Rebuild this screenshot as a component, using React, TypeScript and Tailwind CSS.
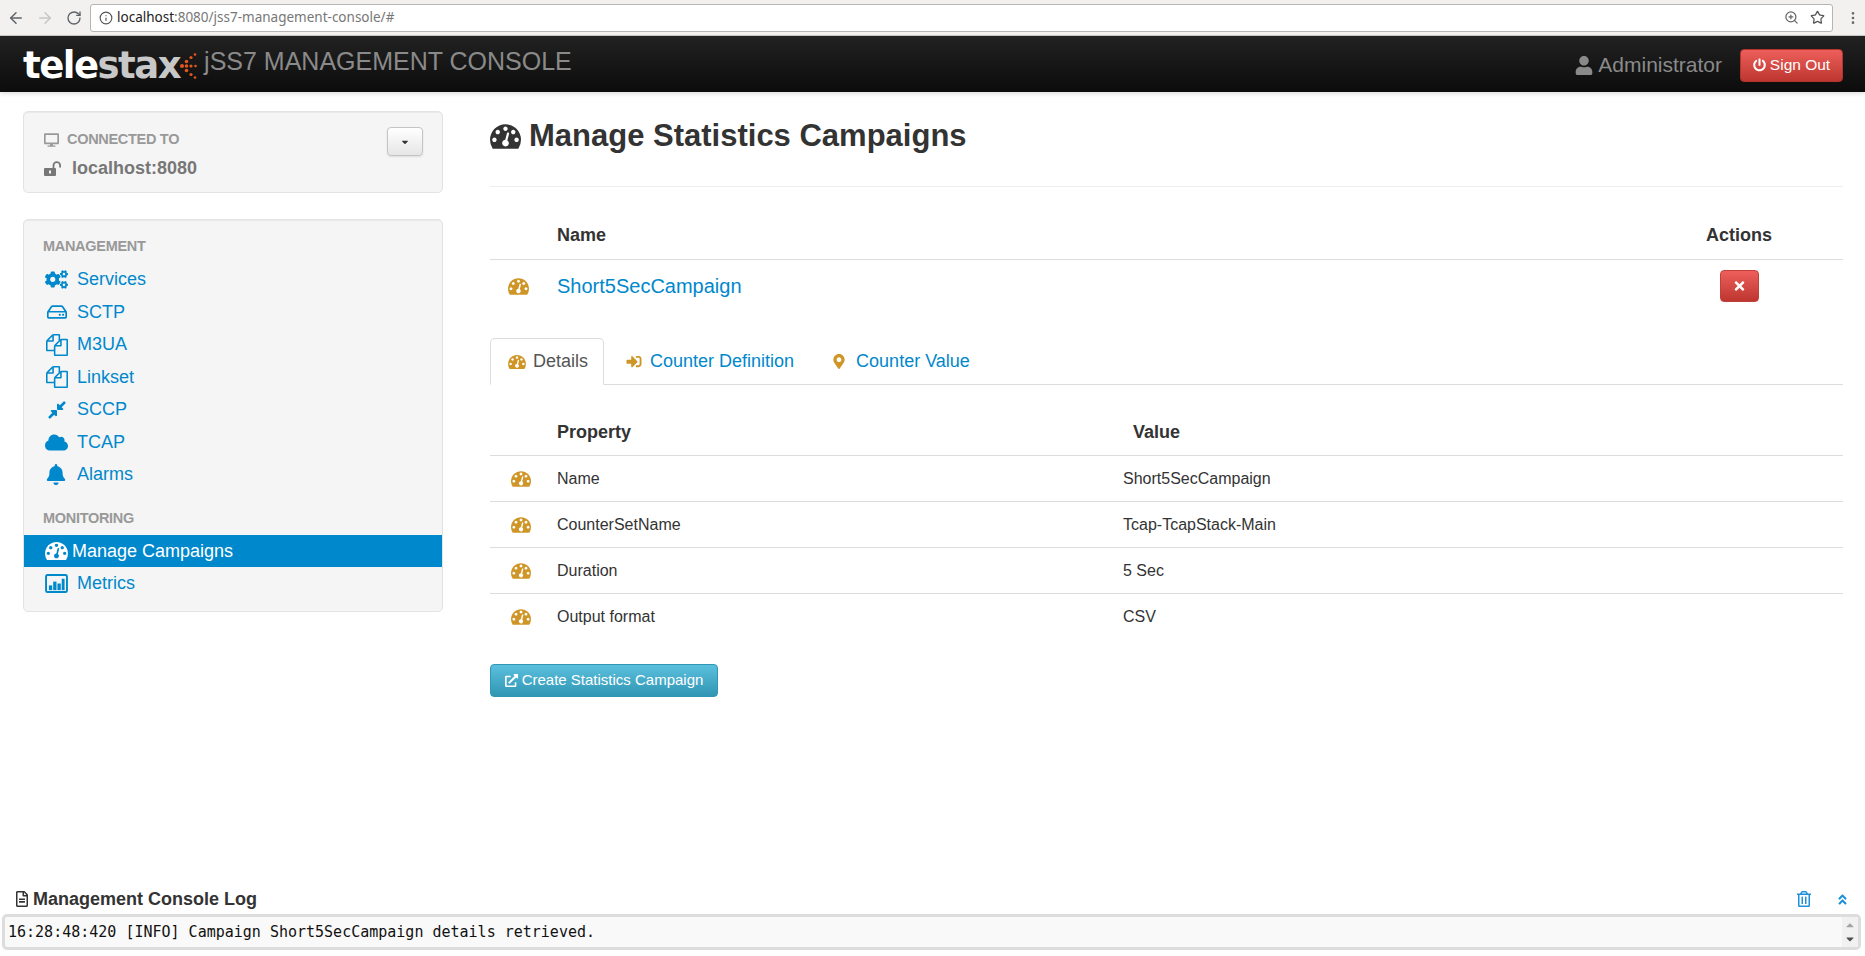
import React from 'react';
import { ArrowLeft, ArrowRight, RotateCw, Info, ZoomIn, Star, EllipsisVertical } from 'lucide-react';
import {
  FaCogs, FaRegHdd, FaCompressAlt, FaCloud, FaBell, FaDesktop, FaUser, FaPowerOff, FaTimes,
  FaSignInAlt, FaMapMarkerAlt, FaExternalLinkAlt, FaRegTrashAlt, FaAngleDoubleUp, FaRegFileAlt, FaCaretDown, FaCaretUp,
} from 'react-icons/fa';

const Tacho = ({ className }: { className?: string }) => (
  <svg viewBox="0 320 1792 1408" className={className} fill="currentColor">
    <path d="M384 1216q0-53-37.5-90.5t-90.5-37.5-90.5 37.5-37.5 90.5 37.5 90.5 90.5 37.5 90.5-37.5 37.5-90.5zm192-448q0-53-37.5-90.5t-90.5-37.5-90.5 37.5-37.5 90.5 37.5 90.5 90.5 37.5 90.5-37.5 37.5-90.5zm428 481l101-382q6-26-7.5-48.5t-38.5-29.5-48 6.5-30 39.5l-101 382q-60 5-107 43.5t-63 98.5q-20 77 20 146t117 89 146-20 89-117q16-60-6-117t-72-91zm660-33q0-53-37.5-90.5t-90.5-37.5-90.5 37.5-37.5 90.5 37.5 90.5 90.5 37.5 90.5-37.5 37.5-90.5zm-640-640q0-53-37.5-90.5t-90.5-37.5-90.5 37.5-37.5 90.5 37.5 90.5 90.5 37.5 90.5-37.5 37.5-90.5zm448 192q0-53-37.5-90.5t-90.5-37.5-90.5 37.5-37.5 90.5 37.5 90.5 90.5 37.5 90.5-37.5 37.5-90.5zm320 448q0 261-141 483-19 29-54 29h-1402q-35 0-54-29-141-221-141-483 0-182 71-348t191-286 286-191 348-71 348 71 286 191 191 286 71 348z" />
  </svg>
);

const Files = ({ className }: { className?: string }) => (
  <svg viewBox="0 0 1792 1792" className={className} fill="currentColor">
    <path d="M1696 384q40 0 68 28t28 68v1216q0 40-28 68t-68 28h-960q-40 0-68-28t-28-68v-288h-544q-40 0-68-28t-28-68v-672q0-40 20-88t48-76l408-408q28-28 76-48t88-20h416q40 0 68 28t28 68v328q68-40 128-40h416zm-544 213l-299 299h299v-299zm-640-384l-299 299h299v-299zm196 647l316-316v-416h-384v416q0 40-28 68t-68 28h-416v640h512v-256q0-40 20-88t48-76zm956 804v-1152h-384v416q0 40-28 68t-68 28h-416v640h896z" />
  </svg>
);

const BoxChart = ({ className }: { className?: string }) => (
  <svg viewBox="0 0 24 20" className={className} fill="currentColor">
    <path d="M2.500 0h19A2.500 2.500 0 0 1 24 2.500v15a2.500 2.500 0 0 1-2.500 2.500h-19A2.500 2.500 0 0 1 0 17.500v-15A2.500 2.500 0 0 1 2.500 0zm0 2a.500.500 0 0 0-.500.500v15a.500.500 0 0 0 .500.500h19a.500.500 0 0 0 .500-.500v-15a.500.500 0 0 0-.500-.500z" />
    <rect x="4" y="12" width="3.500" height="5" />
    <rect x="8.500" y="8" width="3.500" height="9" />
    <rect x="13" y="10" width="3.500" height="7" />
    <rect x="17.500" y="5" width="3" height="12" />
  </svg>
);

const OpenLock = ({ className }: { className?: string }) => (
  <svg viewBox="0 0 18 15" className={className}>
    <path fill="currentColor" fillRule="evenodd" d="M1 7h10a1 1 0 0 1 1 1v6a1 1 0 0 1-1 1H1a1 1 0 0 1-1-1V8a1 1 0 0 1 1-1zm4 2.500v3h2v-3z" />
    <path fill="none" stroke="currentColor" strokeWidth="1.800" d="M9.500 7V4.500a3.300 3.300 0 0 1 6.600 0V6.500" />
  </svg>
);

const LogoDots = () => (
  <svg viewBox="0 0 17 26" className="w-[17px] h-[26px]" fill="#e2571e">
    <circle cx="2" cy="13" r="2" />
    <circle cx="6.500" cy="8.500" r="1.800" />
    <circle cx="6.500" cy="13" r="1.800" />
    <circle cx="6.500" cy="17.500" r="1.800" />
    <circle cx="11" cy="4.500" r="1.600" />
    <circle cx="11" cy="13" r="1.600" />
    <circle cx="11" cy="21.500" r="1.600" />
    <circle cx="15" cy="1.500" r="1.300" />
    <circle cx="15.500" cy="13" r="1.300" />
    <circle cx="15" cy="24.500" r="1.300" />
  </svg>
);

const navItems = [
  { label: 'Services', icon: <FaCogs className="w-[23px] h-[21px]" /> },
  { label: 'SCTP', icon: <FaRegHdd className="w-[20px] h-[18px] ml-[2px]" /> },
  { label: 'M3UA', icon: <Files className="w-[22px] h-[22px] ml-[1px]" /> },
  { label: 'Linkset', icon: <Files className="w-[22px] h-[22px] ml-[1px]" /> },
  { label: 'SCCP', icon: <FaCompressAlt className="w-[20px] h-[20px] ml-[2px]" /> },
  { label: 'TCAP', icon: <FaCloud className="w-[23px] h-[19px]" /> },
  { label: 'Alarms', icon: <FaBell className="w-[20px] h-[21px] ml-[1px]" /> },
];

const rows = [
  ['Name', 'Short5SecCampaign'],
  ['CounterSetName', 'Tcap-TcapStack-Main'],
  ['Duration', '5 Sec'],
  ['Output format', 'CSV'],
];

const App = () => {
  return (
    <div className="h-[956px] w-[1865px] overflow-hidden flex flex-col bg-white font-['Liberation_Sans',Arial,sans-serif] text-[#333]">
      {/* browser chrome */}
      <div className="h-[36px] shrink-0 bg-[#f2f1f0] flex items-center border-b border-[#c9c8c6]">
        <ArrowLeft className="w-[18px] h-[18px] ml-[7px] text-[#5f6368]" />
        <ArrowRight className="w-[18px] h-[18px] ml-[11px] text-[#c5c6c8]" />
        <RotateCw className="w-[16px] h-[16px] ml-[12px] text-[#5f6368]" />
        <div className="ml-[8px] w-[1743px] h-[28px] bg-white border border-[#b5b5b3] rounded-[3px] flex items-center font-['Noto_Sans',sans-serif] text-[13.500px]">
          <Info className="w-[14px] h-[14px] ml-[8px] text-[#555]" />
          <span className="ml-[4px] text-[#222]">localhost</span>
          <span className="text-[#777]">:8080/jss7-management-console/#</span>
          <ZoomIn className="w-[15px] h-[15px] ml-auto text-[#666]" />
          <Star className="w-[15px] h-[15px] ml-[11px] mr-[7px] text-[#555]" />
        </div>
        <EllipsisVertical className="w-[16px] h-[16px] ml-[12px] text-[#666]" />
      </div>

      {/* navbar */}
      <div className="h-[56px] shrink-0 bg-gradient-to-b from-[#222222] to-[#0c0c0c] flex items-center pl-[23px] pr-[22px] shadow-[0_2px_4px_rgba(0,0,0,0.12)] relative">
        <div className="flex items-center h-full mt-[3px]">
          <span className="font-['DejaVu_Sans',sans-serif] font-bold text-[37px] leading-none tracking-[-1.500px] text-white">tele<span className="text-[#c8c8c8]">stax</span></span>
          <LogoDots />
        </div>
        <span className="ml-[7px] text-[25px] leading-none text-[#8a8a8a] -mt-[6px]">jSS7 MANAGEMENT CONSOLE</span>
        <FaUser className="ml-auto mt-[2px] w-[18px] h-[19px] text-[#8a8a8a]" />
        <span className="ml-[5px] mt-[2px] text-[21px] text-[#8a8a8a]">Administrator</span>
        <button className="ml-[18px] mt-[2px] w-[103px] h-[33px] rounded-[4px] bg-gradient-to-b from-[#ee5f5b] to-[#bd362f] border border-[#b5332d] text-white text-[15.500px] flex items-center justify-center gap-[4px]">
          <FaPowerOff className="w-[13px] h-[14px]" />
          Sign Out
        </button>
      </div>

      <div className="flex-1 flex min-h-0">
        {/* sidebar */}
        <div className="w-[420px] ml-[23px] shrink-0 pt-[19px]">
          <div className="h-[82px] bg-[#f5f5f5] border border-[#e3e3e3] rounded-[5px] flex justify-between pl-[20px] pr-[19px] shadow-[inset_0_1px_1px_rgba(0,0,0,0.05)]">
            <div className="pt-[16px]">
              <div className="flex items-center h-[24px]">
                <FaDesktop className="w-[15px] h-[14px] text-[#999]" />
                <span className="ml-[8px] text-[14.500px] font-bold text-[#999] tracking-[-0.300px]">CONNECTED TO</span>
              </div>
              <div className="flex items-center h-[28px] mt-[2px]">
                <OpenLock className="w-[18px] h-[15px] text-[#777]" />
                <span className="ml-[10px] text-[18px] font-bold text-[#777]">localhost:8080</span>
              </div>
            </div>
            <button className="mt-[15px] w-[36px] h-[29px] rounded-[4px] bg-gradient-to-b from-white to-[#e6e6e6] border border-[#c4c4c4] shadow-[0_1px_2px_rgba(0,0,0,0.1)] flex items-center justify-center">
              <FaCaretDown className="w-[10px] h-[10px] -ml-[1px] text-[#333]" />
            </button>
          </div>

          <div className="mt-[26px] h-[393px] bg-[#f5f5f5] border border-[#e3e3e3] rounded-[5px] pt-[17px] shadow-[inset_0_1px_1px_rgba(0,0,0,0.05)]">
            <div className="h-[20px] pl-[19px] text-[14.500px] font-bold text-[#999] flex items-center tracking-[-0.300px]">MANAGEMENT</div>
            <div className="mt-[6.500px]">
              {navItems.map((item) => (
                <div key={item.label} className="h-[32.500px] flex items-center pl-[21px] text-[#0088cc] text-[18px]">
                  <span className="w-[32px] flex items-center">{item.icon}</span>
                  {item.label}
                </div>
              ))}
            </div>
            <div className="mt-[18px] h-[20px] pl-[19px] text-[14.500px] font-bold text-[#999] flex items-center tracking-[-0.300px]">MONITORING</div>
            <div className="mt-[6px] h-[32px] bg-[#0088cc] text-white flex items-center pl-[21px] text-[18px]">
              <Tacho className="w-[23px] h-[18px] mr-[4px]" />
              Manage Campaigns
            </div>
            <div className="h-[32px] flex items-center pl-[21px] text-[#0088cc] text-[18px]">
              <span className="w-[32px] flex items-center"><BoxChart className="w-[23px] h-[19px]" /></span>
              Metrics
            </div>
          </div>
        </div>

        {/* main */}
        <div className="flex-1 ml-[47px] mr-[22px] min-w-0">
          <div className="mt-[24px] h-[40px] flex items-center">
            <Tacho className="w-[31px] h-[25px] text-[#333]" />
            <h3 className="ml-[8px] text-[31px] font-bold leading-[40px]">Manage Statistics Campaigns</h3>
          </div>
          <div className="mt-[30px] border-t border-[#eeeeee]" />

          <div className="h-[73px] border-b border-[#dddddd] flex items-end pb-[14px] text-[18px] leading-[20px] font-bold">
            <span className="ml-[67px]">Name</span>
            <span className="ml-auto mr-[71px]">Actions</span>
          </div>
          <div className="h-[52px] flex items-center">
            <Tacho className="w-[21px] h-[17px] ml-[18px] text-[#cf9627]" />
            <a className="ml-[28px] text-[20px] text-[#0088cc]">Short5SecCampaign</a>
            <button className="ml-auto mr-[84px] w-[39px] h-[32px] rounded-[4px] bg-gradient-to-b from-[#ee5f5b] to-[#bd362f] border border-[#c0403a] flex items-center justify-center">
              <FaTimes className="w-[13px] h-[14px] text-white" />
            </button>
          </div>

          <div className="mt-[26px] h-[47px] border-b border-[#dddddd] flex text-[18px]">
            <div className="h-[47px] w-[114px] border border-[#dddddd] border-b-white bg-white rounded-t-[5px] flex items-center pl-[17px] text-[#555]">
              <Tacho className="w-[18px] h-[14px] mr-[7px] text-[#cf9627]" />
              Details
            </div>
            <div className="h-[46px] flex items-center pl-[21px] text-[#0088cc]">
              <FaSignInAlt className="w-[18px] h-[15px] mr-[7px] text-[#cf9627]" />
              Counter Definition
            </div>
            <div className="h-[46px] flex items-center pl-[39px] text-[#0088cc]">
              <FaMapMarkerAlt className="w-[12px] h-[15px] mr-[11px] text-[#cf9627]" />
              Counter Value
            </div>
          </div>

          <div className="h-[71px] border-b border-[#dddddd] flex items-end pb-[13px] text-[18px] leading-[20px] font-bold">
            <span className="ml-[67px] w-[576px]">Property</span>
            <span>Value</span>
          </div>
          {rows.map(([name, value], i) => (
            <div key={name} className={`h-[46px] flex items-center text-[16px] ${i < 3 ? 'border-b border-[#dddddd]' : ''}`}>
              <Tacho className="w-[20px] h-[16px] ml-[21px] text-[#cf9627]" />
              <span className="ml-[26px] w-[566px]">{name}</span>
              <span>{value}</span>
            </div>
          ))}

          <button className="mt-[24px] w-[228px] h-[33px] rounded-[4px] bg-gradient-to-b from-[#5bc0de] to-[#2f96b4] border border-[#2f96b4] text-white text-[15px] flex items-center justify-center gap-[4px]">
            <FaExternalLinkAlt className="w-[13px] h-[13px]" />
            Create Statistics Campaign
          </button>
        </div>
      </div>

      {/* log */}
      <div className="h-[72px] shrink-0">
        <div className="h-[30px] flex items-center pl-[15px] pr-[16px]">
          <FaRegFileAlt className="w-[14px] h-[16px] text-[#333]" />
          <span className="ml-[4px] text-[18px] font-bold">Management Console Log</span>
          <FaRegTrashAlt className="ml-auto w-[14px] h-[16px] text-[#1e90d8]" />
          <FaAngleDoubleUp className="ml-[25px] w-[13px] h-[13px] text-[#1e90d8]" />
        </div>
        <div className="ml-[2px] mr-[4px] h-[36px] border-[3px] border-[#dddddd] rounded-[5px] bg-[#f9f9f9] flex items-center justify-between">
          <span className="ml-[3px] font-['DejaVu_Sans_Mono',monospace] text-[15px] text-[#111]">16:28:48:420 [INFO] Campaign Short5SecCampaign details retrieved.</span>
          <div className="w-[16px] h-full bg-[#f1f1f1] flex flex-col items-center justify-between py-[2px]">
            <FaCaretUp className="w-[12px] h-[12px] text-[#a3a3a3]" />
            <FaCaretDown className="w-[12px] h-[12px] text-[#505050]" />
          </div>
        </div>
      </div>
    </div>
  );
};

export default App;
